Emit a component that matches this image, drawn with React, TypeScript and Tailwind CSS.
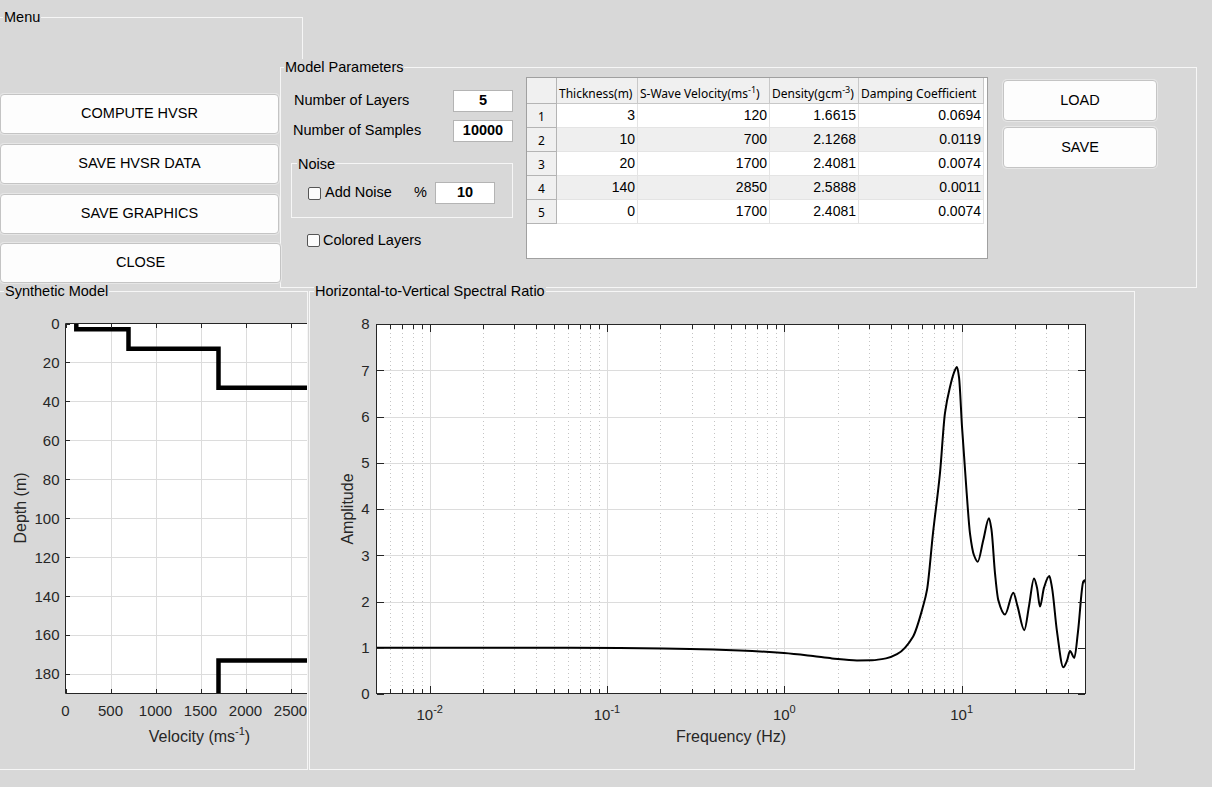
import React from "react";

type Pt = [number, number];

// layer table (thickness, vs, density, damping)
const layers = [
  ["3", "120", "1.6615", "0.0694"],
  ["10", "700", "2.1268", "0.0119"],
  ["20", "1700", "2.4081", "0.0074"],
  ["140", "2850", "2.5888", "0.0011"],
  ["0", "1700", "2.4081", "0.0074"],
];

// HVSR curve traced from the plot: [pixel x, amplitude]
const hvsrPts: Pt[] = [
  [376, 1.0], [520, 1.0], [620, 0.995], [690, 0.975], [740, 0.94], [784, 0.885],
  [813, 0.82], [832, 0.77], [857, 0.727], [872, 0.73], [886, 0.77], [897, 0.86], [913, 1.24],
  [923, 1.89], [927, 2.25], [933, 3.48], [940, 4.78], [945, 6.08], [950, 6.64],
  [954, 6.95], [957, 7.07], [959, 6.85], [962, 5.78], [966.7, 4.34], [970, 3.47],
  [974, 3.0], [977.7, 2.86], [983.3, 3.33], [989, 3.8], [991.5, 3.55], [995, 2.61],
  [998.3, 2.03], [1005, 1.72], [1013.3, 2.19], [1017.5, 1.9], [1024.3, 1.38],
  [1029, 1.9], [1034, 2.5], [1037, 2.3], [1040, 1.89], [1044, 2.3], [1049.3, 2.55],
  [1052, 2.3], [1057, 1.35], [1063.3, 0.58], [1067, 0.72], [1070, 0.93],
  [1074.3, 0.78], [1078, 1.35], [1083.3, 2.43], [1084.6, 2.46], [1086, 2.38],
];

// monotone cubic (Fritsch-Carlson) through the points
function monotonePath(pts: Pt[], toY: (a: number) => number): string {
  const n = pts.length;
  const xs = pts.map((p) => p[0]);
  const ys = pts.map((p) => toY(p[1]));
  const h: number[] = [];
  const d: number[] = [];
  for (let i = 0; i < n - 1; i++) {
    h[i] = xs[i + 1] - xs[i];
    d[i] = (ys[i + 1] - ys[i]) / h[i];
  }
  const m: number[] = new Array(n).fill(0);
  m[0] = d[0];
  m[n - 1] = d[n - 2];
  for (let i = 1; i < n - 1; i++) {
    if (d[i - 1] * d[i] <= 0) m[i] = 0;
    else {
      const w1 = 2 * h[i] + h[i - 1];
      const w2 = h[i] + 2 * h[i - 1];
      m[i] = (w1 + w2) / (w1 / d[i - 1] + w2 / d[i]);
    }
  }
  let path = `M${xs[0]},${ys[0]}`;
  for (let i = 0; i < n - 1; i++) {
    const c1x = xs[i] + h[i] / 3;
    const c1y = ys[i] + (m[i] * h[i]) / 3;
    const c2x = xs[i + 1] - h[i] / 3;
    const c2y = ys[i + 1] - (m[i + 1] * h[i]) / 3;
    path += ` C${c1x.toFixed(2)},${c1y.toFixed(2)} ${c2x.toFixed(2)},${c2y.toFixed(2)} ${xs[i + 1]},${ys[i + 1].toFixed(2)}`;
  }
  return path;
}

const snap = (v: number) => Math.round(v) + 0.5;
const AX = "#262626";
const GRID = "#dcdcdc";

function Button({ label, className }: { label: string; className: string }) {
  return (
    <button
      className={`flex items-center justify-center rounded-[4px] border border-[#c4c4c4] bg-[#fdfdfd] text-[14.5px] text-black ring-1 ring-[#e6e6e6] ${className}`}
    >
      {label}
    </button>
  );
}

function Checkbox() {
  return <span className="block h-[13px] w-[13px] shrink-0 rounded-[2px] border border-[#555555] bg-[#fbfbfb]" />;
}

function NumBox({ value }: { value: string }) {
  return (
    <div className="flex h-[22px] w-[60px] items-center justify-center border border-[#b4b4b4] bg-white text-[14.5px] font-bold">
      {value}
    </div>
  );
}

function PanelTitle({ text, className }: { text: string; className: string }) {
  return (
    <div className={`-mt-[9px] -mb-[8px] h-[17px] w-fit bg-[#d8d8d8] px-[1px] leading-[17px] ${className}`}>
      {text}
    </div>
  );
}

function LayerTable() {
  const head = "flex h-[26px] items-center border-r border-b border-[#c8c8c8] bg-[#f0f0f0] pl-[2px] pt-[7px] font-['Noto_Sans',sans-serif] text-[12px] whitespace-nowrap";
  return (
    <div className="mt-[9px] ml-[13px] h-[182px] w-[462px] border border-[#a0a0a0] bg-white">
      <div className="grid grid-cols-[30px_81px_132px_89px_125px]">
        <div className="h-[26px] border-r border-b border-[#b4b4b4] bg-[#f0f0f0]" />
        <div className={head}>Thickness(m)</div>
        <div className={head}>
          S-Wave Velocity(ms<sup>-1</sup>)
        </div>
        <div className={head}>
          Density(gcm<sup>-3</sup>)
        </div>
        <div className={head}>Damping Coefficient</div>
        {layers.map((row, i) => (
          <React.Fragment key={i}>
            <div className="flex h-[24px] items-center justify-center border-r border-b border-[#b4b4b4] bg-[#f0f0f0] pt-[2px] font-['Noto_Sans',sans-serif] text-[12px]">
              {i + 1}
            </div>
            {row.map((v, j) => (
              <div
                key={j}
                className={`flex h-[24px] items-center justify-end border-r border-b border-[#e4e4e4] pr-[2px] text-[14px] ${
                  i % 2 === 1 ? "bg-[#efefef]" : "bg-white"
                }`}
              >
                {v}
              </div>
            ))}
          </React.Fragment>
        ))}
      </div>
    </div>
  );
}

function SyntheticPlot() {
  const SX = (v: number) => 65.5 + v * 0.09;
  const SY = (d: number) => 323.5 + d * (370 / 190);
  const xt = [0, 500, 1000, 1500, 2000, 2500];
  const yt = [0, 20, 40, 60, 80, 100, 120, 140, 160, 180];
  return (
    <svg width={307} height={477} viewBox="0 292 307 477" className="block" fontFamily="Liberation Sans, Arial, sans-serif">
      <defs>
        <clipPath id="sclip">
          <rect x={65.5} y={323.5} width={260} height={370} />
        </clipPath>
      </defs>
      <rect x={65.5} y={323.5} width={260} height={370} fill="#ffffff" />
      {xt.slice(1).map((v) => (
        <line key={v} x1={snap(SX(v))} x2={snap(SX(v))} y1={324} y2={693} stroke={GRID} />
      ))}
      {yt.slice(1).map((v) => (
        <line key={v} x1={66} x2={307} y1={snap(SY(v))} y2={snap(SY(v))} stroke={GRID} />
      ))}
      <g clipPath="url(#sclip)" fill="none" stroke="#000" strokeWidth={4.5}>
        <path d={`M${SX(120)},${SY(-2)} V${SY(3)} H${SX(700)} V${SY(13)} H${SX(1700)} V${SY(33)} H400`} />
        <path d={`M${SX(1700)},720 V${SY(173)} H400`} />
      </g>
      <path d="M65.5,323.5 V693.5 H310 M65.5,323.5 H310" fill="none" stroke={AX} />
      {yt.map((v) => (
        <line key={v} x1={66} x2={70} y1={snap(SY(v))} y2={snap(SY(v))} stroke={AX} />
      ))}
      {xt.map((v) => (
        <g key={v}>
          <line x1={snap(SX(v))} x2={snap(SX(v))} y1={689} y2={693} stroke={AX} />
          <line x1={snap(SX(v))} x2={snap(SX(v))} y1={324} y2={328} stroke={AX} />
        </g>
      ))}
      <g fill={AX} fontSize={15}>
        {yt.map((v) => (
          <text key={v} x={59.5} y={SY(v) + 5.4} textAnchor="end">
            {v}
          </text>
        ))}
        {xt.map((v) => (
          <text key={v} x={SX(v)} y={715.5} textAnchor="middle">
            {v}
          </text>
        ))}
      </g>
      <g fill={AX} fontSize={16}>
        <text x={199.5} y={742} textAnchor="middle">
          Velocity (ms
          <tspan dy={-7} fontSize={11}>
            -1
          </tspan>
          <tspan dy={7}>)</tspan>
        </text>
        <text transform="translate(26,508) rotate(-90)" textAnchor="middle">
          Depth (m)
        </text>
      </g>
    </svg>
  );
}

function HvsrPlot() {
  const HX = (f: number) => 784.3 + Math.log10(f) * 177.3;
  const HY = (a: number) => 694 - a * 46.25;
  const decades = [0.01, 0.1, 1, 10];
  const minors: number[] = [];
  for (const base of [0.001, 0.01, 0.1, 1, 10]) {
    for (let k = 2; k <= 9; k++) {
      const f = base * k;
      if (f > 0.0051 && f < 49.9) minors.push(f);
    }
  }
  const amps = [0, 1, 2, 3, 4, 5, 6, 7, 8];
  const curve = monotonePath(hvsrPts, HY);
  const sup = ["-2", "-1", "0", "1"];
  return (
    <svg width={824} height={477} viewBox="310 292 824 477" className="block" fontFamily="Liberation Sans, Arial, sans-serif">
      <defs>
        <clipPath id="hclip">
          <rect x={376.5} y={324.5} width={709} height={369} />
        </clipPath>
      </defs>
      <rect x={376.5} y={324.5} width={709} height={369} fill="#ffffff" />
      {minors.map((f) => (
        <line key={f} x1={snap(HX(f))} x2={snap(HX(f))} y1={325} y2={693} stroke="#c4c4c4" strokeDasharray="1 3" />
      ))}
      {decades.map((f) => (
        <line key={f} x1={snap(HX(f))} x2={snap(HX(f))} y1={325} y2={693} stroke={GRID} />
      ))}
      {amps.slice(1, 8).map((a) => (
        <line key={a} x1={377} x2={1085} y1={snap(HY(a))} y2={snap(HY(a))} stroke={GRID} />
      ))}
      <path d={curve} fill="none" stroke="#000" strokeWidth={2} strokeLinejoin="round" clipPath="url(#hclip)" />
      <rect x={376.5} y={324.5} width={709} height={369} fill="none" stroke={AX} />
      {amps.map((a) => (
        <g key={a}>
          <line x1={377} x2={384} y1={snap(HY(a))} y2={snap(HY(a))} stroke={AX} />
          <line x1={1078} x2={1085} y1={snap(HY(a))} y2={snap(HY(a))} stroke={AX} />
        </g>
      ))}
      {decades.map((f) => (
        <g key={f}>
          <line x1={snap(HX(f))} x2={snap(HX(f))} y1={686} y2={693} stroke={AX} />
          <line x1={snap(HX(f))} x2={snap(HX(f))} y1={325} y2={332} stroke={AX} />
        </g>
      ))}
      {minors.map((f) => (
        <g key={f}>
          <line x1={snap(HX(f))} x2={snap(HX(f))} y1={689} y2={693} stroke={AX} />
          <line x1={snap(HX(f))} x2={snap(HX(f))} y1={325} y2={329} stroke={AX} />
        </g>
      ))}
      <g fill={AX} fontSize={15}>
        {amps.map((a) => (
          <text key={a} x={369.5} y={HY(a) + 5.4} textAnchor="end">
            {a}
          </text>
        ))}
        {decades.map((f, i) => (
          <text key={f} x={HX(f)} y={719.5} textAnchor="middle">
            10
            <tspan dy={-7} fontSize={11}>
              {sup[i]}
            </tspan>
          </text>
        ))}
      </g>
      <g fill={AX} fontSize={16}>
        <text x={731} y={742} textAnchor="middle">
          Frequency (Hz)
        </text>
        <text transform="translate(353,509) rotate(-90)" textAnchor="middle">
          Amplitude
        </text>
      </g>
    </svg>
  );
}

export default function App() {
  return (
    <div className="h-[787px] w-[1212px] overflow-hidden bg-[#d8d8d8] font-['Liberation_Sans',Arial,sans-serif] text-[14.5px] text-black">
      {/* Menu panel frame */}
      <div className="pt-[17px]">
        <div className="h-[50px] w-[303px] border-t border-r border-[#f6f6f6]">
          <PanelTitle text="Menu" className="ml-[3px]" />
        </div>
      </div>

      <div className="flex">
        {/* Menu buttons */}
        <div className="flex w-[280px] shrink-0 flex-col gap-[10px] pt-[27px]">
          <Button label="COMPUTE HVSR" className="h-[40px] w-[279px]" />
          <Button label="SAVE HVSR DATA" className="h-[40px] w-[279px]" />
          <Button label="SAVE GRAPHICS" className="h-[40px] w-[279px]" />
          <Button label="CLOSE" className="relative -mt-[1px] h-[40px] w-[281px]" />
        </div>

        {/* Model Parameters */}
        <div className="h-[221px] w-[917px] shrink-0 border border-[#f6f6f6] bg-[#d8d8d8]">
          <PanelTitle text="Model Parameters" className="ml-[3px]" />
          <div className="flex">
            <div className="ml-[10px] flex w-[222px] shrink-0 flex-col pt-[22px]">
              <div className="flex h-[22px] items-center justify-between pl-[3px]">
                <span>Number of Layers</span>
                <NumBox value="5" />
              </div>
              <div className="mt-[8px] flex h-[22px] items-center justify-between pl-[2px]">
                <span>Number of Samples</span>
                <NumBox value="10000" />
              </div>
              <div className="mt-[21px] h-[55px] w-[222px] border border-[#f6f6f6]">
                <PanelTitle text="Noise" className="ml-[5px] mt-[-8px]" />
                <div className="mt-[17px] flex h-[22px] items-center pl-[16px]">
                  <Checkbox />
                  <span className="ml-[4px] w-[89px]">Add Noise</span>
                  <span className="w-[21px]">%</span>
                  <NumBox value="10" />
                </div>
              </div>
              <div className="mt-[16px] flex h-[13px] items-center pl-[16px]">
                <Checkbox />
                <span className="ml-[3px]">Colored Layers</span>
              </div>
            </div>

            <LayerTable />

            <div className="mt-[12px] ml-[15px] flex flex-col gap-[6px]">
              <Button label="LOAD" className="h-[41px] w-[154px]" />
              <Button label="SAVE" className="h-[41px] w-[154px]" />
            </div>
          </div>
        </div>
      </div>

      <div className="mt-[3px] flex">
        {/* Synthetic Model */}
        <div className="h-[479px] w-[308px] shrink-0 border-t border-r border-b border-[#f6f6f6]">
          <PanelTitle text="Synthetic Model" className="ml-[4px]" />
          <SyntheticPlot />
        </div>
        {/* HVSR */}
        <div className="ml-[1px] h-[479px] w-[826px] shrink-0 border border-[#f6f6f6]">
          <PanelTitle text="Horizontal-to-Vertical Spectral Ratio" className="ml-[4px]" />
          <HvsrPlot />
        </div>
      </div>
    </div>
  );
}
